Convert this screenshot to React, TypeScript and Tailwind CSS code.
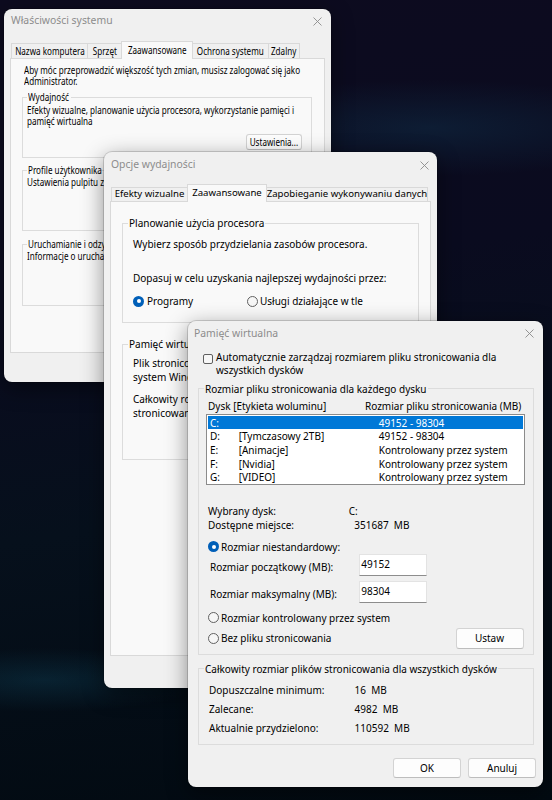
import type { ReactNode } from 'react'

const ui = "font-['Noto_Sans',sans-serif]"

// the legacy dialog is drawn with a narrow face; squeeze Noto Sans to match
function Cond({ children, center = false }: { children: ReactNode; center?: boolean }) {
  return (
    <span
      className={`inline-block whitespace-nowrap scale-x-[0.81] ${center ? 'origin-center' : 'origin-left'}`}
    >
      {children}
    </span>
  )
}

function CondLine({ children }: { children: ReactNode }) {
  return <span className="block origin-left scale-x-[0.81] whitespace-nowrap">{children}</span>
}

function CloseIcon() {
  return (
    <svg width="9" height="9" viewBox="0 0 9 9" fill="none" className="shrink-0">
      <path d="M0.5 0.5L8.5 8.5M8.5 0.5L0.5 8.5" stroke="#8a8a8a" strokeWidth="0.9" />
    </svg>
  )
}

function TitleBar({ title, className }: { title: string; className: string }) {
  return (
    <div className={`flex shrink-0 items-center justify-between ${className}`}>
      <span className={`${ui} text-[10.4px] text-[#8c8c8c]`}>{title}</span>
      <CloseIcon />
    </div>
  )
}

function Radio({ checked = false }: { checked?: boolean }) {
  if (checked) {
    return (
      <span className="flex h-[11px] w-[11px] shrink-0 items-center justify-center rounded-full bg-[#005fb8]">
        <span className="h-[4px] w-[4px] rounded-full bg-white" />
      </span>
    )
  }
  return <span className="h-[11px] w-[11px] shrink-0 rounded-full border border-[#616161] bg-[#f6f6f6]" />
}

function Button({ children, className = '' }: { children: ReactNode; className?: string }) {
  return (
    <button
      type="button"
      className={`flex shrink-0 items-center justify-center whitespace-nowrap rounded-[3px] border border-[#d3d3d3] border-b-[#bdbdbd] bg-[#fdfdfd] ${className}`}
    >
      {children}
    </button>
  )
}

interface TabDef {
  label: ReactNode
  key: string
  w: string
  selected?: boolean
}

function TabRow({ tabs, unselectedH, className }: { tabs: TabDef[]; unselectedH: string; className: string }) {
  return (
    <div className={`relative z-10 -mb-[1px] flex h-[18px] items-end whitespace-nowrap ${className}`}>
      {tabs.map((t, i) => (
        <div
          key={t.key}
          className={`flex items-center justify-center border border-b-0 border-[#d9d9d9] ${t.w} ${
            i > 0 ? '-ml-[1px]' : ''
          } ${t.selected ? 'relative h-[18px] bg-[#f9f9f9] pb-[1px]' : `${unselectedH} mb-[1px] bg-[#f0f0f0]`}`}
        >
          {t.label}
        </div>
      ))}
    </div>
  )
}

const windowCls =
  'absolute flex flex-col rounded-[8px] bg-[#f0f0f0] shadow-[0_6px_22px_rgba(0,0,0,0.45)] ring-1 ring-black/15'

const group = 'min-w-0 border border-[#dcdcdc]'

function SystemProperties() {
  const names = [
    { t: 'Nazwa komputera', w: 'w-[77px]' },
    { t: 'Sprzęt', w: 'w-[35px]' },
    { t: 'Zaawansowane', w: 'w-[72px]', selected: true },
    { t: 'Ochrona systemu', w: 'w-[77px]' },
    { t: 'Zdalny', w: 'w-[32px]' },
  ]
  const tabs: TabDef[] = names.map((n) => ({
    key: n.t,
    w: n.w,
    selected: n.selected,
    label: <Cond center>{n.t}</Cond>,
  }))
  return (
    <div className={`${windowCls} left-[4px] top-[9px] h-[373px] w-[327px] ${ui} text-[10px] text-black`}>
      <TitleBar title="Właściwości systemu" className="h-[24px] pl-[7px] pr-[9px]" />
      <TabRow tabs={tabs} unselectedH="h-[15px]" className="ml-[7px] mt-[8px]" />
      <div className="mx-[6px] flex h-[295px] min-w-0 flex-col overflow-hidden border border-[#d9d9d9] bg-[#f9f9f9] px-[11px] pt-[6px] leading-[10.5px]">
        <p className="ml-[2px]">
          <CondLine>Aby móc przeprowadzić większość tych zmian, musisz zalogować się jako</CondLine>
          <CondLine>Administrator.</CondLine>
        </p>
        <fieldset className={`${group} mr-[1px] mt-[5px] pb-[7px] pl-[4px] pr-[9px]`}>
          <legend className="w-[44px] px-[1px] leading-[12px]">
            <Cond>Wydajność</Cond>
          </legend>
          <div className="mt-[2px]">
            <CondLine>Efekty wizualne, planowanie użycia procesora, wykorzystanie pamięci i</CondLine>
            <CondLine>pamięć wirtualna</CondLine>
          </div>
          <div className="mt-[8px] flex justify-end">
            <Button className="h-[16px] w-[56px]">
              <Cond center>Ustawienia...</Cond>
            </Button>
          </div>
        </fieldset>
        <fieldset className={`${group} mr-[1px] mt-[6px] h-[67px] pl-[4px] pr-[9px]`}>
          <legend className="w-[74px] px-[1px] leading-[12px]">
            <Cond>Profile użytkownika</Cond>
          </legend>
          <div className="mt-[1px]">
            <CondLine>Ustawienia pulpitu związane z logowaniem</CondLine>
          </div>
        </fieldset>
        <fieldset className={`${group} mr-[1px] mt-[7px] h-[68px] pl-[4px] pr-[9px]`}>
          <legend className="w-[110px] px-[1px] leading-[12px]">
            <Cond>Uruchamianie i odzyskiwanie</Cond>
          </legend>
          <div className="mt-[1px]">
            <CondLine>Informacje o uruchamianiu systemu, awarii systemu i debugowaniu</CondLine>
          </div>
        </fieldset>
      </div>
    </div>
  )
}

function PerformanceOptions() {
  const tabs: TabDef[] = [
    { key: 'a', label: 'Efekty wizualne', w: 'w-[77px]' },
    { key: 'b', label: 'Zaawansowane', w: 'w-[80px]', selected: true },
    { key: 'c', label: 'Zapobieganie wykonywaniu danych', w: 'w-[162px]' },
  ]
  return (
    <div className={`${windowCls} left-[104px] top-[152px] h-[536px] w-[333px] ${ui} text-[10px] text-black`}>
      <TitleBar title="Opcje wydajności" className="h-[26px] pl-[7px] pr-[8px]" />
      <div className="text-[9.6px]">
        <TabRow tabs={tabs} unselectedH="h-[14px]" className="ml-[7px] mt-[6px]" />
      </div>
      <div className="mx-[6px] flex h-[455px] flex-col border border-[#d9d9d9] bg-[#f9f9f9] px-[11px] pt-[14px] leading-[14px]">
        <fieldset className={`${group} pb-[14px]`}>
          <legend className="ml-[5px] px-[1px]">Planowanie użycia procesora</legend>
          <div className="px-[10px] pt-[7px]">
            <div>Wybierz sposób przydzielania zasobów procesora.</div>
            <div className="mt-[20px]">Dopasuj w celu uzyskania najlepszej wydajności przez:</div>
            <div className="mt-[9px] flex h-[14px] items-center">
              <div className="flex w-[114px] items-center gap-[3px]">
                <Radio checked />
                <span>Programy</span>
              </div>
              <div className="flex items-center gap-[2px]">
                <Radio />
                <span>Usługi działające w tle</span>
              </div>
            </div>
          </div>
        </fieldset>
        <fieldset className={`${group} mt-[14px] h-[123px]`}>
          <legend className="ml-[5px] px-[1px]">Pamięć wirtualna</legend>
          <div className="whitespace-nowrap px-[10px] pt-[5px]">
            <div>
              Plik stronicowania to obszar na dysku twardym, którego
              <br />
              system Windows używa tak, jakby był pamięcią RAM.
            </div>
            <div className="mt-[8px]">
              Całkowity rozmiar pliku
              <br />
              stronicowania dla wszystkich dysków: 110592 MB
            </div>
          </div>
        </fieldset>
      </div>
    </div>
  )
}

const drives = [
  { letter: 'C:', label: '', size: '49152 - 98304', selected: true },
  { letter: 'D:', label: '[Tymczasowy 2TB]', size: '49152 - 98304' },
  { letter: 'E:', label: '[Animacje]', size: 'Kontrolowany przez system' },
  { letter: 'F:', label: '[Nvidia]', size: 'Kontrolowany przez system' },
  { letter: 'G:', label: '[VIDEO]', size: 'Kontrolowany przez system' },
]

const totals = [
  { label: 'Dopuszczalne minimum:', value: '16  MB' },
  { label: 'Zalecane:', value: '4982  MB' },
  { label: 'Aktualnie przydzielono:', value: '110592  MB' },
]

function TextBox({ value }: { value: string }) {
  return (
    <div className="h-[22px] w-[68px] border border-[#e3e3e3] border-b-[#8d8d8d] bg-white pl-[1px] pt-[2px] leading-[14px]">
      {value}
    </div>
  )
}

function VirtualMemory() {
  return (
    <div className={`${windowCls} left-[188px] top-[321px] h-[466px] w-[355px] ${ui} text-[10px] leading-[14px] text-black`}>
      <TitleBar title="Pamięć wirtualna" className="h-[24px] pl-[6px] pr-[9px]" />
      <div className="ml-[15px] mt-[5.5px] flex items-start leading-[13.5px]">
        <span className="mt-[3px] h-[10px] w-[10px] shrink-0 rounded-[2px] border border-[#5f5f5f] bg-[#f7f7f7]" />
        <span className="ml-[3px] whitespace-nowrap">
          Automatycznie zarządzaj rozmiarem pliku stronicowania dla
          <br />
          wszystkich dysków
        </span>
      </div>
      <fieldset className={`${group} ml-[10px] mr-[9.5px] mt-[4px] pb-[5px] pl-[9px] pr-[9px]`}>
        <legend className="-ml-[4px] px-[1px]">Rozmiar pliku stronicowania dla każdego dysku</legend>
        <div className="mt-[3px] flex h-[14px]">
          <span className="w-[157px] shrink-0">Dysk [Etykieta woluminu]</span>
          <span>Rozmiar pliku stronicowania (MB)</span>
        </div>
        <div className="-ml-[2px] mt-[1.3px] h-[71px] w-[319px] border border-[#8b8b8b] bg-white p-[1px]">
          {drives.map((d) => (
            <div
              key={d.letter}
              className={`flex h-[13.7px] items-center pl-[2px] ${d.selected ? 'bg-[#0078d7] text-white' : ''}`}
            >
              <span className="w-[28.7px] shrink-0">{d.letter}</span>
              <span className="w-[140px] shrink-0">{d.label}</span>
              <span>{d.size}</span>
            </div>
          ))}
        </div>
        <div className="mt-[19px] flex h-[14px]">
          <span className="w-[140.7px] shrink-0">Wybrany dysk:</span>
          <span>C:</span>
        </div>
        <div className="flex h-[14px] whitespace-pre">
          <span className="w-[146.3px] shrink-0">Dostępne miejsce:</span>
          <span>351687  MB</span>
        </div>
        <div className="mt-[8px] flex h-[14px] items-center gap-[2px]">
          <Radio checked />
          <span>Rozmiar niestandardowy:</span>
        </div>
        <div className="flex h-[22px]">
          <span className="w-[151.3px] shrink-0 pl-[2px] pt-[6px]">Rozmiar początkowy (MB):</span>
          <TextBox value="49152" />
        </div>
        <div className="mt-[5px] flex h-[22px]">
          <span className="w-[151.3px] shrink-0 pl-[2px] pt-[6px]">Rozmiar maksymalny (MB):</span>
          <TextBox value="98304" />
        </div>
        <div className="mt-[8px] flex h-[14px] items-center gap-[2px]">
          <Radio />
          <span>Rozmiar kontrolowany przez system</span>
        </div>
        <div className="mt-[3px] flex h-[21px] items-center justify-between">
          <div className="flex items-center gap-[2px]">
            <Radio />
            <span>Bez pliku stronicowania</span>
          </div>
          <Button className="h-[21px] w-[68px]">Ustaw</Button>
        </div>
      </fieldset>
      <fieldset className={`${group} ml-[10px] mr-[9.5px] mt-[7px] pb-[6px] pl-[10px]`}>
        <legend className="-ml-[5px] px-[1px]">Całkowity rozmiar plików stronicowania dla wszystkich dysków</legend>
        <div className="whitespace-pre pt-[5px]">
          {totals.map((t) => (
            <div key={t.label} className="flex h-[19px] items-center">
              <span className="w-[145.6px] shrink-0">{t.label}</span>
              <span>{t.value}</span>
            </div>
          ))}
        </div>
      </fieldset>
      <div className="mt-[13px] flex justify-end gap-[7.7px] pr-[7.3px]">
        <Button className="h-[20.7px] w-[67.3px]">OK</Button>
        <Button className="h-[20.7px] w-[67.3px]">Anuluj</Button>
      </div>
    </div>
  )
}

export default function App() {
  return (
    <div className="relative h-[800px] w-[552px] overflow-hidden bg-[radial-gradient(ellipse_45%_6%_at_78%_16%,rgba(18,70,100,0.3),transparent),radial-gradient(ellipse_30%_4%_at_8%_85%,rgba(16,72,96,0.35),transparent),linear-gradient(172deg,#0d0b1f_0%,#0a0b1f_35%,#06101c_62%,#020a11_100%)]">
      <SystemProperties />
      <PerformanceOptions />
      <VirtualMemory />
    </div>
  )
}
